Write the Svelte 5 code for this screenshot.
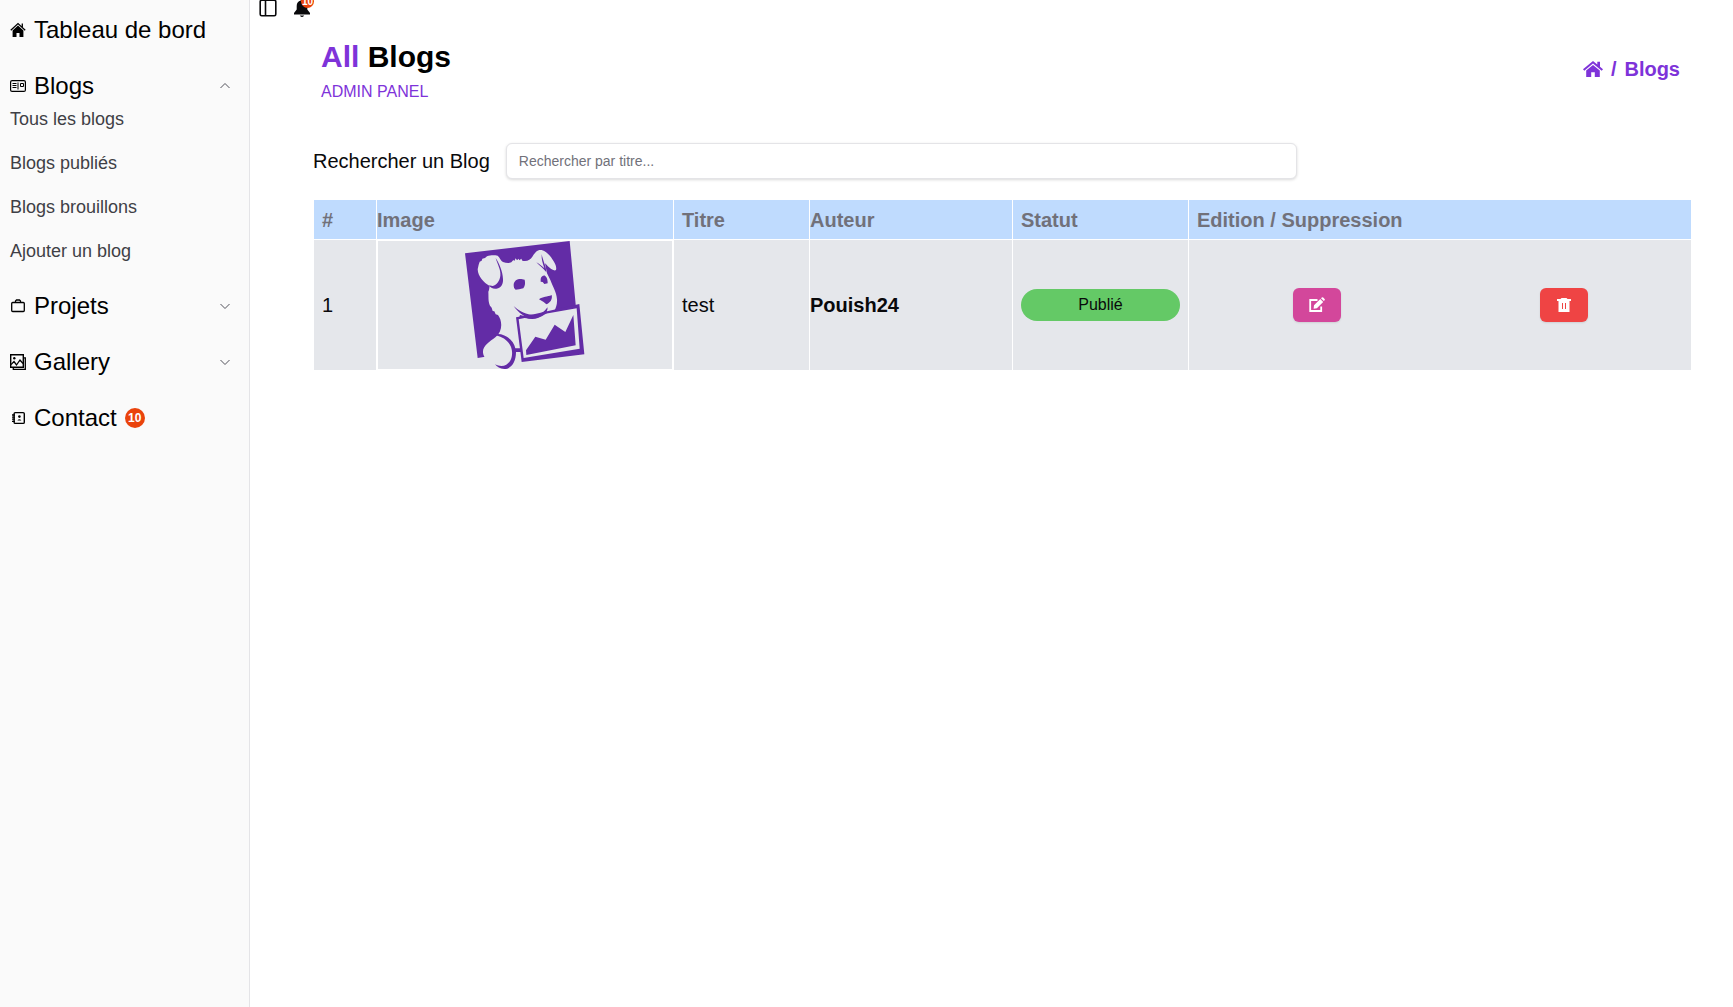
<script lang="ts">
	type MenuGroup = {
		label: string;
		icon: string;
		links?: string[];
		collapsible?: boolean;
		badge?: number;
	};

	type Blog = {
		id: number;
		title: string;
		author: string;
		status: string;
	};

	const unread = 10;

	let open = $state('Blogs');
	let search = $state('');

	const menu: MenuGroup[] = [
		{ label: 'Tableau de bord', icon: 'home' },
		{
			label: 'Blogs',
			icon: 'news',
			collapsible: true,
			links: ['Tous les blogs', 'Blogs publiés', 'Blogs brouillons', 'Ajouter un blog']
		},
		{ label: 'Projets', icon: 'briefcase', collapsible: true, links: [] },
		{ label: 'Gallery', icon: 'gallery', collapsible: true, links: [] },
		{ label: 'Contact', icon: 'contact', badge: unread }
	];

	const blogs: Blog[] = [{ id: 1, title: 'test', author: 'Pouish24', status: 'Publié' }];

	let filtered = $derived(
		blogs.filter((blog) => blog.title.toLowerCase().includes(search.toLowerCase()))
	);

	function toggle(label: string) {
		open = open === label ? '' : label;
	}
</script>

{#snippet menuIcon(name: string)}
	<svg class="icon" viewBox="0 0 16 16" fill="none" stroke="currentColor" aria-hidden="true">
		{#if name === 'home'}
			<path d="M.8 8.3 8 1.6l7.2 6.7M12.3 1.5v4" stroke-width="1.3" />
			<path d="M8 3.6 2.6 8.6V15h3.9v-4h3v4h3.9V8.600z" fill="currentColor" stroke="none" />
		{:else if name === 'news'}
			<rect x=".6" y="2.6" width="14.8" height="10.8" rx="1.5" stroke-width="1.200" />
			<path d="M2.500 5.500h4M2.500 7.500h4M2.500 9.500h4M8 4.500v7M10.500 5.500h3v3h-3z" />
		{:else if name === 'briefcase'}
			<rect x="1.7" y="4.500" width="12.600" height="9" rx="1" stroke-width="1.300" />
			<path d="M5.500 4.400V3l1-1h3l1 1v1.400" stroke-width="1.300" />
		{:else if name === 'gallery'}
			<path d="M.7.7h12.600v12.600H.7z" stroke-width="1.400" />
			<path d="M3.300 13.300v2h12V3.900h-2M1 10.600l3-3 2.500 3.400L10 6l3 3.500" stroke-width="1.300" />
			<circle cx="4.300" cy="4.300" r="1.200" fill="currentColor" stroke="none" />
		{:else}
			<rect x="4.100" y="2.600" width="10.200" height="10.800" rx="1.200" stroke-width="1.400" />
			<path d="M2 5h3M2 7.200h3M2 9.200h3M2 11.300h3" stroke-width="1.300" />
			<circle cx="9.400" cy="6.600" r="1.300" fill="currentColor" stroke="none" />
			<path d="M7.400 10.500q2-2.600 4 0z" fill="currentColor" stroke="none" />
		{/if}
	</svg>
{/snippet}

<div class="layout">
	<aside class="sidebar">
		<nav aria-label="Administration">
			{#each menu as group (group.label)}
				<div class="group">
					{#if group.collapsible}
						<button
							type="button"
							class="entry"
							aria-expanded={open === group.label}
							onclick={() => toggle(group.label)}
						>
							{@render menuIcon(group.icon)}
							<span>{group.label}</span>
							<svg class="chevron" viewBox="0 0 16 16" fill="none" stroke="currentColor" aria-hidden="true">
								<path d={open === group.label ? 'm3.5 10 4.5-4.5 4.5 4.5' : 'm3.5 6 4.5 4.5L12.5 6'} />
							</svg>
						</button>
					{:else}
						<a class="entry" href="#{group.icon}">
							{@render menuIcon(group.icon)}
							<span>{group.label}</span>
							{#if group.badge}
								<span class="badge">{group.badge}</span>
							{/if}
						</a>
					{/if}
					{#if group.links?.length && open === group.label}
						<ul>
							{#each group.links as link}
								<li><a href="#blogs">{link}</a></li>
							{/each}
						</ul>
					{/if}
				</div>
			{/each}
		</nav>
	</aside>

	<main>
		<div class="toolbar">
			<button type="button" aria-label="Basculer le menu">
				<svg viewBox="0 0 18 18" fill="none" stroke="currentColor" stroke-width="1.6" aria-hidden="true">
					<rect x="1.2" y="1.2" width="15.6" height="15.6" rx="1.5" />
					<path d="M6.500 1v16" />
				</svg>
			</button>
			<button type="button" class="bell" aria-label="Notifications">
				<svg viewBox="0 0 18 18" fill="currentColor" aria-hidden="true">
					<path d="M9 .3a1.200 1.200 0 0 0-1.200 1.200C5 2 3.700 4.300 3.700 7v3.500L1 14v1.600h16V14l-2.700-3.500V7c0-2.700-1.300-5-4.100-5.500A1.200 1.200 0 0 0 9 .3zM6.800 16.400q2.200 3.200 4.400 0z" />
				</svg>
				<span class="count">{unread}</span>
			</button>
		</div>

		<div class="page">
			<header>
				<div>
					<h1><span>All</span> Blogs</h1>
					<p>ADMIN PANEL</p>
				</div>
				<nav class="crumbs" aria-label="Fil d'Ariane">
					<a href="#home" aria-label="Accueil">
						<svg viewBox="0 0 20 16" fill="currentColor" aria-hidden="true">
							<path d="M10 0 0 8.200l1.300 1.500L10 2.500l8.700 7.200L20 8.200l-3-2.500V.8h-2.700v2.700z" />
							<path d="m10 4-6.800 5.600V16h5v-4.800h3.600V16h5V9.600z" />
						</svg>
					</a>
					<span>/</span>
					<span>Blogs</span>
				</nav>
			</header>

			<div class="search">
				<label for="search">Rechercher un Blog</label>
				<input id="search" type="text" placeholder="Rechercher par titre..." bind:value={search} />
			</div>

			<table>
				<thead>
					<tr>
						<th class="col-id">#</th>
						<th class="col-image flush">Image</th>
						<th class="col-title">Titre</th>
						<th class="col-author flush">Auteur</th>
						<th class="col-status">Statut</th>
						<th>Edition / Suppression</th>
					</tr>
				</thead>
				<tbody>
					{#each filtered as blog (blog.id)}
						<tr>
							<td>{blog.id}</td>
							<td class="flush">
								<div class="picture">
									<svg viewBox="76 33 360 384" role="img" aria-label={blog.title}>
										<g fill="#632ca6">
											<path d="M76 70 390 33l19 200-120 40-100 20-39 85-36 6z" />
										</g>
										<g fill="#e5e7eb">
											<path d="m148 180 2-12c-18-10-35-28-36-50l3-14 3-9 6-3 2-6 8-2 6-5c12-4 22-3 32-2 6 5 10 16 16 19 9 3 18 4 25 1l6-7 3 3 4-8 4 6 5-5 2 5 6-5 3 6c14 4 24-3 30-12 8-12 14-22 28-20 18 6 28 20 36 34 8 12 10 26 5 27-10 2-22-12-31-21l6 30 10 20c8 22 18 35 20 58 1 14-3 26-8 34l-15 3-86 28 12 130-30 4-20 20-55-26c-8-12-18-18-20-33-2-20 20-33 38-47 22-18 20-49 7-66l-7-2-4-9-5-1-3-10-5-6c-6-14-4-26-5-42z" />
										</g>
										<g fill="#632ca6">
											<path d="M168 84c6 20 16 36 14 53-2 16-11 27-23 31l-11-2c4 8 12 11 22 10 16-3 21-15 20-29-1-24-12-48-22-63z" />
											<path d="M306 73c-1 16 3 26 8 42-8-7-15-13-24-18 10 10 21 18 30 30 0-17-10-34-14-54z" />
											<path d="M222 164c1-13 12-18 23-17l10 2c2 9 2 18-4 26-9 2-17 4-23 4-5-3-6-9-6-15zM303 147c1-7 8-12 13-10 7 5 8 14 8 23l-10 2-5-6-6-1zM298 208c11-9 25-7 38-13 3 12-4 24-16 28l-8-7z" />
											<path d="M222 228c18 16 39 27 61 27 18-2 31-8 40-23 3 10-6 16-10 23-9 10-18 14-31 13-24-3-46-20-60-40z" />
											<path d="m229 262 57-10 133-30 15 151-188 23zM165 313c30-5 57 17 62 42h16v11h-14c0 31-15 51-35 51-13-1-22-6-28-14 23 12 44 2 50-22 7-31-14-60-51-65z" />
										</g>
										<path fill="#e5e7eb" d="m237 268 21-5c18 8 41 4 55-11l98-17 9 121-168 28z" />
										<path fill="#632ca6" d="m260 375-1-14 28-41 31 9 27-45 32 22 24-51 7 91z" />
										<path
											fill="none"
											stroke="#632ca6"
											stroke-width="7"
											d="M240 258c32 9 64 2 82-13"
										/>
									</svg>
								</div>
							</td>
							<td>{blog.title}</td>
							<td class="flush author">{blog.author}</td>
							<td><span class="status">{blog.status}</span></td>
							<td class="tight">
								<div class="actions">
									<button type="button" class="edit" aria-label="Modifier {blog.title}">
										<svg viewBox="0 0 16 16" fill="none" stroke="currentColor" aria-hidden="true">
											<path d="M8.500 3H1.200v11h11V9.500" stroke-width="1.800" />
											<path d="m5 8.300 6.300-6.300 2.900 2.900-6.300 6.300-3.300.5zM12 1.300l.8-.8q.7-.6 1.400 0l1.400 1.400q.6.700 0 1.400l-.8.8z" fill="currentColor" stroke="none" />
										</svg>
									</button>
									<button type="button" class="delete" aria-label="Supprimer {blog.title}">
										<svg viewBox="0 0 16 16" fill="currentColor" aria-hidden="true">
											<path fill-rule="evenodd" d="M4.500 2 5.500 1h5l1 1H15v2h-1.500v11h-11V4H1V2zM6 6v6h1V6zm3 0v6h1V6z" />
										</svg>
									</button>
								</div>
							</td>
						</tr>
					{/each}
				</tbody>
			</table>
		</div>
	</main>
</div>

<style>
	:global(body) {
		margin: 0;
		background: #fff;
		color: #09090b;
		font-family: 'Liberation Sans', Arial, sans-serif;
		font-size: 16px;
		line-height: 24px;
	}

	* {
		box-sizing: border-box;
	}

	button {
		padding: 0;
		border: 0;
		background: none;
		color: inherit;
		font: inherit;
		cursor: pointer;
	}

	a {
		color: inherit;
		text-decoration: none;
	}

	svg {
		display: block;
		flex-shrink: 0;
	}

	.layout {
		display: flex;
		min-height: 100vh;
	}

	.sidebar {
		flex: 0 0 250px;
		padding: 8px;
		background: #fafafa;
		border-right: 1px solid #e4e4e7;
	}

	.group {
		margin-bottom: 12px;
	}

	.entry {
		display: flex;
		align-items: center;
		gap: 8px;
		width: 100%;
		height: 44px;
		padding: 0 8px 0 2px;
		color: #000;
		font-size: 24px;
		line-height: 32px;
	}

	.icon {
		width: 16px;
		height: 16px;
	}

	.chevron {
		width: 16px;
		height: 16px;
		margin-left: auto;
		color: #52525b;
	}

	.badge {
		width: 20px;
		height: 20px;
		border-radius: 50%;
		background: #ea430c;
		color: #fff;
		font-size: 12px;
		font-weight: 700;
		line-height: 20px;
		text-align: center;
	}

	ul {
		margin: -3px 0 0;
		padding: 0;
		list-style: none;
	}

	li a {
		display: block;
		padding: 0 2px 16px;
		color: #3f3f46;
		font-size: 18px;
		line-height: 28px;
	}

	li:last-child a {
		padding-bottom: 7px;
	}

	main {
		flex: 1;
		min-width: 0;
	}

	.toolbar {
		display: flex;
		align-items: center;
		gap: 16px;
		height: 16px;
		padding: 0 9px;
	}

	.toolbar svg {
		width: 18px;
		height: 18px;
	}

	.bell {
		position: relative;
	}

	.count {
		position: absolute;
		top: -4px;
		right: -3px;
		width: 13px;
		height: 13px;
		border-radius: 50%;
		background: #ea430c;
		color: #fff;
		font-size: 10px;
		font-weight: 700;
		line-height: 14px;
		text-align: center;
	}

	.page {
		padding: 16px 41px 16px 63px;
	}

	header {
		display: flex;
		align-items: center;
		justify-content: space-between;
		padding: 2px 12px 7px 8px;
		color: #7e33d9;
	}

	h1 {
		margin: 0;
		color: #000;
		font-size: 30px;
		line-height: 46px;
	}

	h1 span {
		color: #7e33d9;
	}

	header p {
		margin: 0;
	}

	.crumbs {
		display: flex;
		align-items: center;
		gap: 8px;
		font-size: 20px;
		font-weight: 700;
	}

	.crumbs svg {
		width: 20px;
		height: 16px;
	}

	.search {
		display: flex;
		align-items: center;
		gap: 16px;
		margin: 32px 0 20px;
	}

	.search label {
		font-size: 20px;
		line-height: 28px;
	}

	.search input {
		width: 57.4%;
		height: 36px;
		padding: 4px 12px;
		border: 1px solid #e4e4e7;
		border-radius: 6px;
		box-shadow: 0 1px 3px rgb(0 0 0 / 15%);
		color: inherit;
		font: inherit;
		font-size: 14px;
	}

	.search input::placeholder {
		color: #71717a;
	}

	table {
		width: 100%;
		border-collapse: collapse;
		table-layout: fixed;
		font-size: 20px;
		line-height: 28px;
	}

	th,
	td {
		padding: 0 8px;
		border: 1px solid #fff;
		text-align: left;
	}

	th {
		height: 40px;
		background: #bfdbfe;
		color: #71717a;
	}

	td {
		background: #e5e7eb;
	}

	.flush {
		padding: 0;
	}

	.tight {
		padding: 0 4px;
	}

	.col-id {
		width: 63px;
	}

	.col-image {
		width: 297px;
	}

	.col-title {
		width: 136px;
	}

	.col-author {
		width: 203px;
	}

	.col-status {
		width: 176px;
	}

	.picture {
		border: 1px solid #fff;
	}

	.picture svg {
		width: 120px;
		height: 128px;
		margin: 0 auto;
	}

	.author {
		font-weight: 700;
	}

	.status {
		display: block;
		border-radius: 16px;
		background: #64c966;
		font-size: 16px;
		line-height: 32px;
		text-align: center;
	}

	.actions {
		display: flex;
		justify-content: space-around;
	}

	.actions button {
		padding: 9px 16px;
		border-radius: 6px;
		box-shadow: 0 1px 2px rgb(0 0 0 / 10%);
		color: #fff;
	}

	.actions svg {
		width: 16px;
		height: 16px;
	}

	.edit {
		background: #d3479b;
	}

	.delete {
		background: #ef4444;
	}
</style>
